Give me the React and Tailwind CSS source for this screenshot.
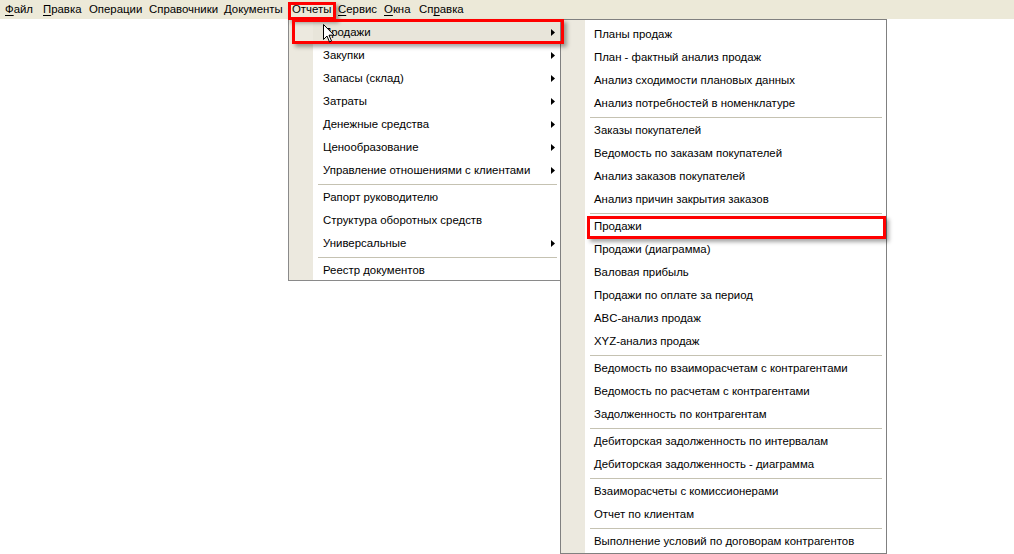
const menuBar = [
  { label: 'Файл', u: 0, w: 38 },
  { label: 'Правка', u: 0, w: 46 },
  { label: 'Операции', u: -1, w: 60 },
  { label: 'Справочники', u: -1, w: 75 },
  { label: 'Документы', u: -1, w: 68 },
  { label: 'Отчеты', u: -1, w: 46 },
  { label: 'Сервис', u: 0, w: 46 },
  { label: 'Окна', u: 0, w: 35 },
  { label: 'Справка', u: 2, w: 50 },
];

const reportItems = [
  { label: 'Продажи', sub: true, active: true },
  { label: 'Закупки', sub: true },
  { label: 'Запасы (склад)', sub: true },
  { label: 'Затраты', sub: true },
  { label: 'Денежные средства', sub: true },
  { label: 'Ценообразование', sub: true },
  { label: 'Управление отношениями с клиентами', sub: true },
  '-',
  { label: 'Рапорт руководителю' },
  { label: 'Структура оборотных средств' },
  { label: 'Универсальные', sub: true },
  '-',
  { label: 'Реестр документов' },
];

const salesItems = [
  'Планы продаж',
  'План - фактный анализ продаж',
  'Анализ сходимости плановых данных',
  'Анализ потребностей в номенклатуре',
  '-',
  'Заказы покупателей',
  'Ведомость по заказам покупателей',
  'Анализ заказов покупателей',
  'Анализ причин закрытия заказов',
  '-',
  'Продажи',
  'Продажи (диаграмма)',
  'Валовая прибыль',
  'Продажи по оплате за период',
  'ABC-анализ продаж',
  'XYZ-анализ продаж',
  '-',
  'Ведомость по взаиморасчетам с контрагентами',
  'Ведомость по расчетам с контрагентами',
  'Задолженность по контрагентам',
  '-',
  'Дебиторская задолженность по интервалам',
  'Дебиторская задолженность - диаграмма',
  '-',
  'Взаиморасчеты с комиссионерами',
  'Отчет по клиентам',
  '-',
  'Выполнение условий по договорам контрагентов',
];

const Mnemonic = ({ text, u }) => {
  if (u < 0) return text;
  return (
    <>
      {text.slice(0, u)}
      <span className="underline underline-offset-2">{text[u]}</span>
      {text.slice(u + 1)}
    </>
  );
};

const Arrow = () => (
  <svg width="4" height="7" viewBox="0 0 4 7" className="block">
    <path d="M0 0 L4 3.5 L0 7 Z" fill="#000" />
  </svg>
);

const Separator = ({ left, right }) => (
  <div className="h-[4px] flex items-center">
    <div className={`h-px w-full bg-[#c5c2b2] ${left} ${right}`} />
  </div>
);

const Cursor = () => (
  <svg width="12" height="19" viewBox="0 0 12 19" className="absolute left-[323px] top-[24px]">
    <path d="M0.5 0.5 L0.5 15.5 L4 12 L6.5 18 L8.5 17 L6 11.2 L11 11.2 Z" fill="#fff" stroke="#000" strokeWidth="1" strokeLinejoin="miter" />
  </svg>
);

export default function App() {
  return (
    <div
      className="relative w-[1014px] h-[554px] bg-white overflow-hidden text-black text-[11.4px]"
      style={{ fontFamily: '"Liberation Sans", Arial, sans-serif' }}
    >
      {/* menu bar */}
      <div className="h-[19px] bg-[#ece9d8] flex items-center pl-[5px]">
        {menuBar.map((m) => (
          <div key={m.label} className="leading-[19px] whitespace-nowrap" style={{ width: m.w }}>
            <Mnemonic text={m.label} u={m.u} />
          </div>
        ))}
      </div>

      {/* Отчеты dropdown */}
      <div className="absolute left-[288px] top-[19px] w-[274px] h-[262px] border border-[#8a8a8a] bg-white flex">
        <div className="w-[24px] bg-[#ece9df] shrink-0" />
        <div className="flex-1 pt-[1px]">
          {reportItems.map((it, i) =>
            it === '-' ? (
              <Separator key={i} left="ml-[5px]" right="mr-[4px]" />
            ) : (
              <div
                key={i}
                className={`h-[23px] flex items-center justify-between pl-[10px] pr-[6px] whitespace-nowrap ${it.active ? 'bg-[#e8e5da]' : ''}`}
              >
                <span>{it.label}</span>
                {it.sub && <Arrow />}
              </div>
            )
          )}
        </div>
      </div>

      {/* Продажи submenu */}
      <div className="absolute left-[560px] top-[19px] w-[327px] h-[535px] border border-[#808080] bg-white flex">
        <div className="w-[24px] bg-[#ece9df] shrink-0" />
        <div className="flex-1 pt-[3px]">
          {salesItems.map((label, i) =>
            label === '-' ? (
              <Separator key={i} left="ml-[5px]" right="mr-[4px]" />
            ) : (
              <div key={i} className="h-[23px] flex items-center pl-[9px] whitespace-nowrap">
                {label}
              </div>
            )
          )}
        </div>
      </div>

      {/* annotation frames */}
      <div className="absolute left-[288px] top-[2px] w-[48px] h-[18px] border-[3px] border-[#ff0000] shadow-[3px_3px_4px_rgba(0,0,0,0.35)]" />
      <div className="absolute left-[292px] top-[19px] w-[272px] h-[25px] border-[3px] border-[#ff0000] shadow-[3px_3px_4px_rgba(0,0,0,0.35)]" />
      <div className="absolute left-[587px] top-[216px] w-[299px] h-[23px] border-[3px] border-[#ff0000] shadow-[3px_3px_4px_rgba(0,0,0,0.35)]" />

      <Cursor />
    </div>
  );
}
